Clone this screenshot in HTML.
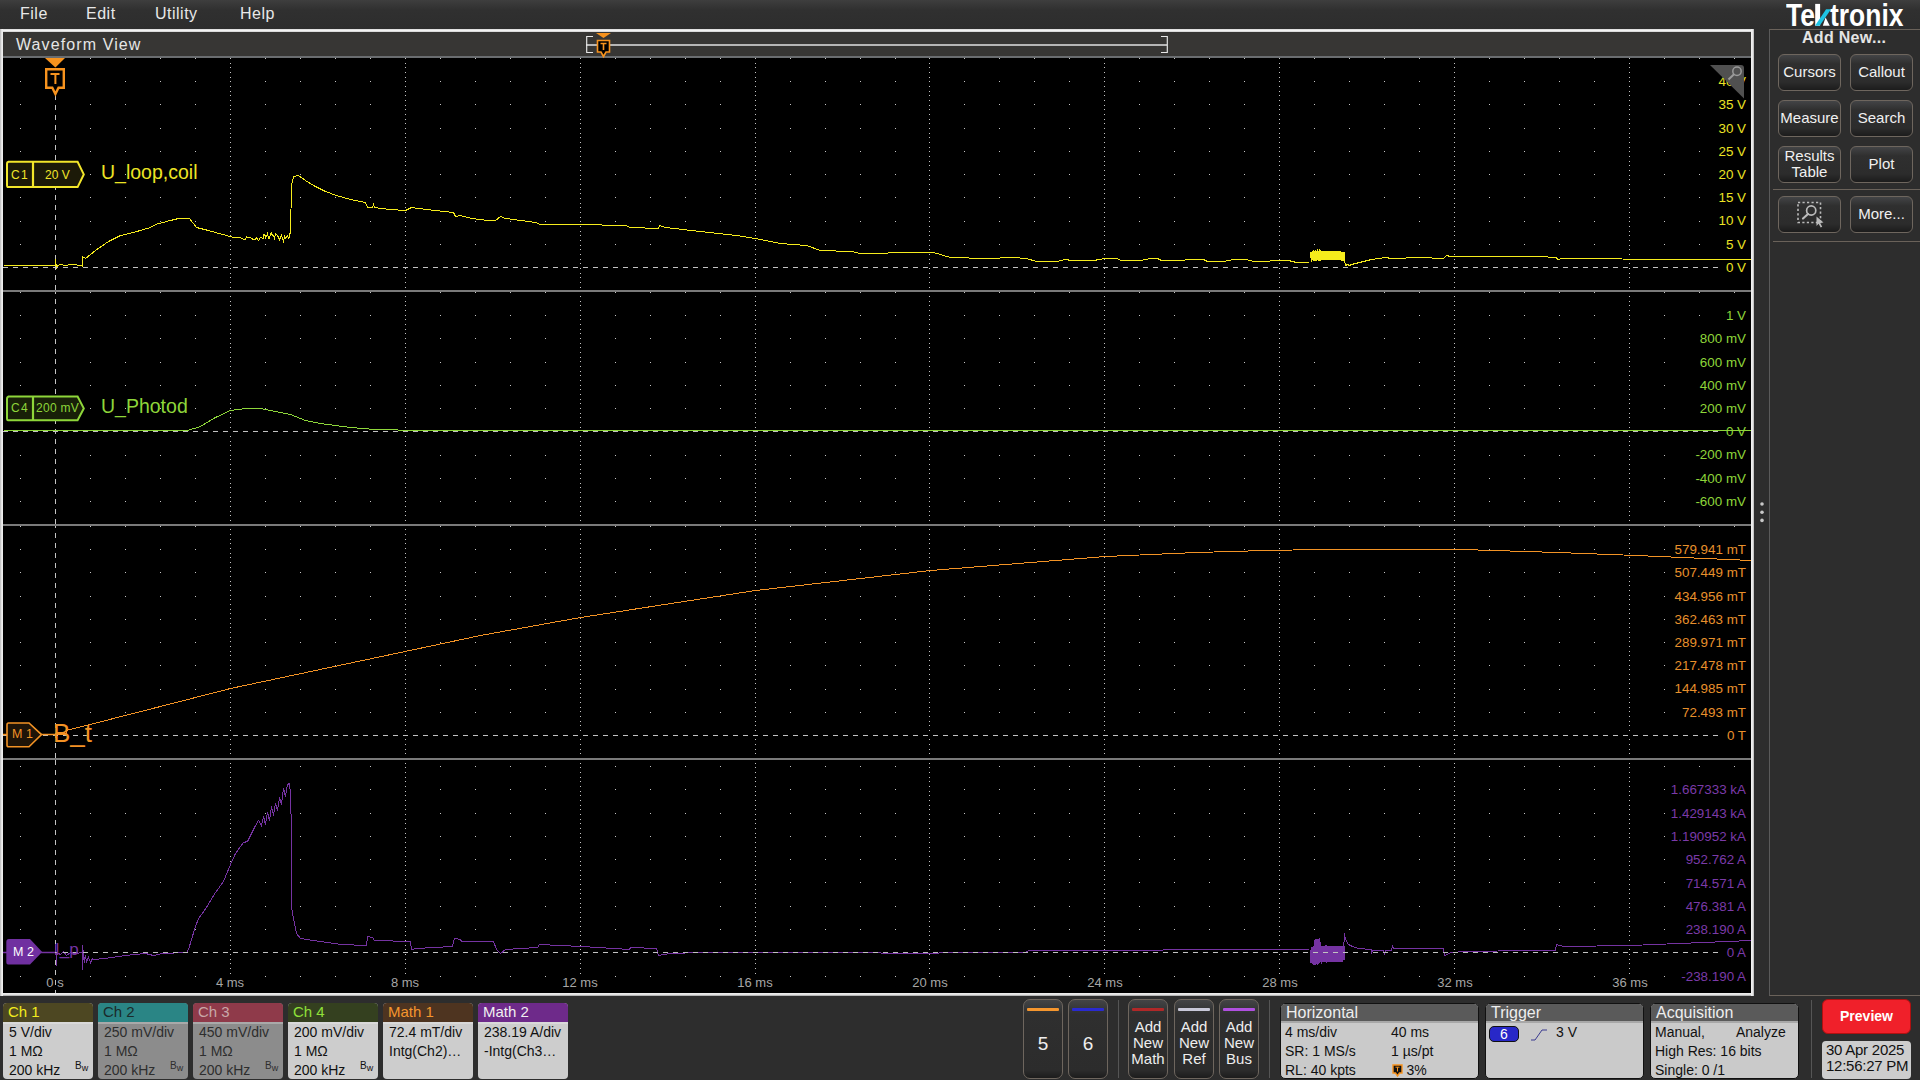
<!DOCTYPE html>
<html><head><meta charset="utf-8"><title>Waveform View</title>
<style>
*{margin:0;padding:0;box-sizing:border-box}
html,body{width:1920px;height:1080px;overflow:hidden;background:#2d2d2d;font-family:"Liberation Sans", sans-serif;}
.a{position:absolute;white-space:nowrap}
.menu{color:#e8e8e8;font-size:16px;top:5px;letter-spacing:0.5px}
.yl{position:absolute;right:169px;font-size:13.4px;line-height:14px;height:14px;text-align:right;background:#000;padding:0 5px 0 4px;white-space:nowrap}
.tl{position:absolute;top:975px;font-size:13px;line-height:16px;color:#a6a6a6;white-space:nowrap}
.btn{position:absolute;width:63px;height:37px;border:1px solid #6e665e;border-radius:6px;background:linear-gradient(#434446 0,#2f2f2f 9px,#2c2c2c 27px,#1c1c1c 100%);color:#f0f0f0;font-size:15px;text-align:center;line-height:33px}
.badge{position:absolute;top:1003px;width:90px;height:76px;border-radius:4px;overflow:hidden;background:#cdcdcd}
.badge .h{height:19px;font-size:15px;line-height:18px;padding-left:5px}
.badge .sep{position:absolute;top:19px;left:0;right:0;height:2px;background:rgba(255,255,255,0.25)}
.badge .b{position:absolute;top:20px;left:0;right:0;bottom:0;font-size:14px;color:#111;padding-left:6px;line-height:19px}
.bw{position:absolute;left:72px;top:57px;font-size:10px;line-height:11px;color:#111}
.sbtn{position:absolute;top:999px;width:40px;height:80px;border:1px solid #6e665e;border-radius:7px;background:linear-gradient(#434446 0,#2f2f2f 14px,#2c2c2c 70px,#1c1c1c 100%);color:#eee;text-align:center}
.box{position:absolute;top:1003px;height:76px;border-radius:5px;overflow:hidden;background:#cacaca;border:1px solid #111}
.box .h{height:19px;background:#5a5a5a;color:#eee;font-size:16px;line-height:17px;padding-left:5px;border-bottom:2px solid #a8a8a8}
.box .b{font-size:14px;color:#111;line-height:19px;padding-left:4px}
.cl{position:absolute;font-size:19.5px;line-height:22px;white-space:nowrap}
</style></head><body>

<div class="a" style="left:0;top:0;width:1920px;height:29px;background:linear-gradient(180deg,#3e3e3e 0,#303030 10px,#2d2d2d 29px)"></div>
<div class="a" style="left:0;top:29px;width:1754px;height:3px;background:linear-gradient(180deg,#d6d6d6,#f2f2f2 50%,#cfcfcf)"></div>
<div class="a" style="left:0;top:993px;width:1754px;height:3px;background:linear-gradient(180deg,#f0f0f0,#e2e2e2 50%,#a0a0a0)"></div>
<div class="a" style="left:0;top:29px;width:3px;height:967px;background:linear-gradient(90deg,#b8b8b8,#f4f4f4 70%,#e6e6e6)"></div>
<div class="a" style="left:1751px;top:29px;width:3px;height:967px;background:linear-gradient(90deg,#f4f4f4,#e8e8e8 50%,#b4b4b4)"></div>
<div class="a" style="left:3px;top:32px;width:1748px;height:24px;background:#373634"></div>
<div class="a" style="left:3px;top:56px;width:1748px;height:2px;background:#6a6d70"></div>
<div class="a" style="left:3px;top:58px;width:1748px;height:935px;background:#000"></div>
<div class="a" style="left:16px;top:36px;font-size:16px;line-height:18px;color:#e6e6e6;letter-spacing:1.1px">Waveform View</div>
<svg width="1920" height="1080" style="position:absolute;left:0;top:0"><line x1="586" y1="45" x2="1167" y2="45" stroke="#b6b6b6" stroke-width="2"/><path d="M593,36.5 H586.7 V52.5 H593" fill="none" stroke="#e8e8e8" stroke-width="1.15"/><path d="M1161,36.5 H1167.3 V52.5 H1161" fill="none" stroke="#e8e8e8" stroke-width="1.15"/><path d="M596,33 L611,33 L603.5,38 Z" fill="#f7931e"/><path d="M597.5,40.5 H609.5 V52 H606 L603.5,56.5 L601,52 H597.5 Z" fill="#000" stroke="#f7931e" stroke-width="1.6"/><path d="M600.5,43.5 H606.5 M603.5,43.5 V50" stroke="#f7931e" stroke-width="1.6"/></svg>
<div class="a menu" style="left:20px">File</div>
<div class="a menu" style="left:86px">Edit</div>
<div class="a menu" style="left:155px">Utility</div>
<div class="a menu" style="left:240px">Help</div>
<svg width="1920" height="1080" style="position:absolute;left:0;top:0">
<defs><g id="dr" fill="#c4c4c4"><rect x="20" y="0" width="1" height="1"/><rect x="90" y="0" width="1" height="1"/><rect x="125" y="0" width="1" height="1"/><rect x="160" y="0" width="1" height="1"/><rect x="195" y="0" width="1" height="1"/><rect x="265" y="0" width="1" height="1"/><rect x="300" y="0" width="1" height="1"/><rect x="335" y="0" width="1" height="1"/><rect x="370" y="0" width="1" height="1"/><rect x="440" y="0" width="1" height="1"/><rect x="475" y="0" width="1" height="1"/><rect x="510" y="0" width="1" height="1"/><rect x="545" y="0" width="1" height="1"/><rect x="615" y="0" width="1" height="1"/><rect x="650" y="0" width="1" height="1"/><rect x="685" y="0" width="1" height="1"/><rect x="720" y="0" width="1" height="1"/><rect x="790" y="0" width="1" height="1"/><rect x="825" y="0" width="1" height="1"/><rect x="860" y="0" width="1" height="1"/><rect x="895" y="0" width="1" height="1"/><rect x="964" y="0" width="1" height="1"/><rect x="999" y="0" width="1" height="1"/><rect x="1034" y="0" width="1" height="1"/><rect x="1069" y="0" width="1" height="1"/><rect x="1139" y="0" width="1" height="1"/><rect x="1174" y="0" width="1" height="1"/><rect x="1209" y="0" width="1" height="1"/><rect x="1244" y="0" width="1" height="1"/><rect x="1314" y="0" width="1" height="1"/><rect x="1349" y="0" width="1" height="1"/><rect x="1384" y="0" width="1" height="1"/><rect x="1419" y="0" width="1" height="1"/><rect x="1489" y="0" width="1" height="1"/><rect x="1524" y="0" width="1" height="1"/><rect x="1559" y="0" width="1" height="1"/><rect x="1594" y="0" width="1" height="1"/><rect x="1664" y="0" width="1" height="1"/><rect x="1699" y="0" width="1" height="1"/><rect x="1734" y="0" width="1" height="1"/></g><g id="vd" fill="#c4c4c4"><rect x="0" y="58" width="1" height="1"/><rect x="0" y="63" width="1" height="1"/><rect x="0" y="67" width="1" height="1"/><rect x="0" y="72" width="1" height="1"/><rect x="0" y="77" width="1" height="1"/><rect x="0" y="81" width="1" height="1"/><rect x="0" y="86" width="1" height="1"/><rect x="0" y="91" width="1" height="1"/><rect x="0" y="95" width="1" height="1"/><rect x="0" y="100" width="1" height="1"/><rect x="0" y="105" width="1" height="1"/><rect x="0" y="109" width="1" height="1"/><rect x="0" y="114" width="1" height="1"/><rect x="0" y="119" width="1" height="1"/><rect x="0" y="123" width="1" height="1"/><rect x="0" y="128" width="1" height="1"/><rect x="0" y="133" width="1" height="1"/><rect x="0" y="137" width="1" height="1"/><rect x="0" y="142" width="1" height="1"/><rect x="0" y="147" width="1" height="1"/><rect x="0" y="151" width="1" height="1"/><rect x="0" y="156" width="1" height="1"/><rect x="0" y="161" width="1" height="1"/><rect x="0" y="165" width="1" height="1"/><rect x="0" y="170" width="1" height="1"/><rect x="0" y="175" width="1" height="1"/><rect x="0" y="179" width="1" height="1"/><rect x="0" y="184" width="1" height="1"/><rect x="0" y="189" width="1" height="1"/><rect x="0" y="193" width="1" height="1"/><rect x="0" y="198" width="1" height="1"/><rect x="0" y="203" width="1" height="1"/><rect x="0" y="207" width="1" height="1"/><rect x="0" y="212" width="1" height="1"/><rect x="0" y="217" width="1" height="1"/><rect x="0" y="221" width="1" height="1"/><rect x="0" y="226" width="1" height="1"/><rect x="0" y="231" width="1" height="1"/><rect x="0" y="235" width="1" height="1"/><rect x="0" y="240" width="1" height="1"/><rect x="0" y="245" width="1" height="1"/><rect x="0" y="249" width="1" height="1"/><rect x="0" y="254" width="1" height="1"/><rect x="0" y="259" width="1" height="1"/><rect x="0" y="263" width="1" height="1"/><rect x="0" y="268" width="1" height="1"/><rect x="0" y="273" width="1" height="1"/><rect x="0" y="277" width="1" height="1"/><rect x="0" y="282" width="1" height="1"/><rect x="0" y="287" width="1" height="1"/><rect x="0" y="291" width="1" height="1"/><rect x="0" y="296" width="1" height="1"/><rect x="0" y="301" width="1" height="1"/><rect x="0" y="305" width="1" height="1"/><rect x="0" y="310" width="1" height="1"/><rect x="0" y="315" width="1" height="1"/><rect x="0" y="319" width="1" height="1"/><rect x="0" y="324" width="1" height="1"/><rect x="0" y="329" width="1" height="1"/><rect x="0" y="333" width="1" height="1"/><rect x="0" y="338" width="1" height="1"/><rect x="0" y="343" width="1" height="1"/><rect x="0" y="347" width="1" height="1"/><rect x="0" y="352" width="1" height="1"/><rect x="0" y="357" width="1" height="1"/><rect x="0" y="361" width="1" height="1"/><rect x="0" y="366" width="1" height="1"/><rect x="0" y="371" width="1" height="1"/><rect x="0" y="375" width="1" height="1"/><rect x="0" y="380" width="1" height="1"/><rect x="0" y="385" width="1" height="1"/><rect x="0" y="389" width="1" height="1"/><rect x="0" y="394" width="1" height="1"/><rect x="0" y="399" width="1" height="1"/><rect x="0" y="403" width="1" height="1"/><rect x="0" y="408" width="1" height="1"/><rect x="0" y="413" width="1" height="1"/><rect x="0" y="417" width="1" height="1"/><rect x="0" y="422" width="1" height="1"/><rect x="0" y="427" width="1" height="1"/><rect x="0" y="431" width="1" height="1"/><rect x="0" y="436" width="1" height="1"/><rect x="0" y="441" width="1" height="1"/><rect x="0" y="445" width="1" height="1"/><rect x="0" y="450" width="1" height="1"/><rect x="0" y="455" width="1" height="1"/><rect x="0" y="459" width="1" height="1"/><rect x="0" y="464" width="1" height="1"/><rect x="0" y="469" width="1" height="1"/><rect x="0" y="473" width="1" height="1"/><rect x="0" y="478" width="1" height="1"/><rect x="0" y="483" width="1" height="1"/><rect x="0" y="487" width="1" height="1"/><rect x="0" y="492" width="1" height="1"/><rect x="0" y="497" width="1" height="1"/><rect x="0" y="501" width="1" height="1"/><rect x="0" y="506" width="1" height="1"/><rect x="0" y="511" width="1" height="1"/><rect x="0" y="515" width="1" height="1"/><rect x="0" y="520" width="1" height="1"/><rect x="0" y="525" width="1" height="1"/><rect x="0" y="529" width="1" height="1"/><rect x="0" y="534" width="1" height="1"/><rect x="0" y="539" width="1" height="1"/><rect x="0" y="543" width="1" height="1"/><rect x="0" y="548" width="1" height="1"/><rect x="0" y="553" width="1" height="1"/><rect x="0" y="557" width="1" height="1"/><rect x="0" y="562" width="1" height="1"/><rect x="0" y="567" width="1" height="1"/><rect x="0" y="571" width="1" height="1"/><rect x="0" y="576" width="1" height="1"/><rect x="0" y="581" width="1" height="1"/><rect x="0" y="585" width="1" height="1"/><rect x="0" y="590" width="1" height="1"/><rect x="0" y="595" width="1" height="1"/><rect x="0" y="599" width="1" height="1"/><rect x="0" y="604" width="1" height="1"/><rect x="0" y="609" width="1" height="1"/><rect x="0" y="613" width="1" height="1"/><rect x="0" y="618" width="1" height="1"/><rect x="0" y="623" width="1" height="1"/><rect x="0" y="627" width="1" height="1"/><rect x="0" y="632" width="1" height="1"/><rect x="0" y="637" width="1" height="1"/><rect x="0" y="641" width="1" height="1"/><rect x="0" y="646" width="1" height="1"/><rect x="0" y="651" width="1" height="1"/><rect x="0" y="655" width="1" height="1"/><rect x="0" y="660" width="1" height="1"/><rect x="0" y="665" width="1" height="1"/><rect x="0" y="669" width="1" height="1"/><rect x="0" y="674" width="1" height="1"/><rect x="0" y="679" width="1" height="1"/><rect x="0" y="683" width="1" height="1"/><rect x="0" y="688" width="1" height="1"/><rect x="0" y="693" width="1" height="1"/><rect x="0" y="697" width="1" height="1"/><rect x="0" y="702" width="1" height="1"/><rect x="0" y="707" width="1" height="1"/><rect x="0" y="711" width="1" height="1"/><rect x="0" y="716" width="1" height="1"/><rect x="0" y="721" width="1" height="1"/><rect x="0" y="725" width="1" height="1"/><rect x="0" y="730" width="1" height="1"/><rect x="0" y="735" width="1" height="1"/><rect x="0" y="739" width="1" height="1"/><rect x="0" y="744" width="1" height="1"/><rect x="0" y="749" width="1" height="1"/><rect x="0" y="753" width="1" height="1"/><rect x="0" y="758" width="1" height="1"/><rect x="0" y="763" width="1" height="1"/><rect x="0" y="767" width="1" height="1"/><rect x="0" y="772" width="1" height="1"/><rect x="0" y="777" width="1" height="1"/><rect x="0" y="781" width="1" height="1"/><rect x="0" y="786" width="1" height="1"/><rect x="0" y="791" width="1" height="1"/><rect x="0" y="795" width="1" height="1"/><rect x="0" y="800" width="1" height="1"/><rect x="0" y="805" width="1" height="1"/><rect x="0" y="809" width="1" height="1"/><rect x="0" y="814" width="1" height="1"/><rect x="0" y="819" width="1" height="1"/><rect x="0" y="823" width="1" height="1"/><rect x="0" y="828" width="1" height="1"/><rect x="0" y="833" width="1" height="1"/><rect x="0" y="837" width="1" height="1"/><rect x="0" y="842" width="1" height="1"/><rect x="0" y="847" width="1" height="1"/><rect x="0" y="851" width="1" height="1"/><rect x="0" y="856" width="1" height="1"/><rect x="0" y="861" width="1" height="1"/><rect x="0" y="865" width="1" height="1"/><rect x="0" y="870" width="1" height="1"/><rect x="0" y="875" width="1" height="1"/><rect x="0" y="879" width="1" height="1"/><rect x="0" y="884" width="1" height="1"/><rect x="0" y="889" width="1" height="1"/><rect x="0" y="893" width="1" height="1"/><rect x="0" y="898" width="1" height="1"/><rect x="0" y="903" width="1" height="1"/><rect x="0" y="907" width="1" height="1"/><rect x="0" y="912" width="1" height="1"/><rect x="0" y="917" width="1" height="1"/><rect x="0" y="921" width="1" height="1"/><rect x="0" y="926" width="1" height="1"/><rect x="0" y="931" width="1" height="1"/><rect x="0" y="935" width="1" height="1"/><rect x="0" y="940" width="1" height="1"/><rect x="0" y="945" width="1" height="1"/><rect x="0" y="949" width="1" height="1"/><rect x="0" y="954" width="1" height="1"/><rect x="0" y="959" width="1" height="1"/><rect x="0" y="963" width="1" height="1"/><rect x="0" y="968" width="1" height="1"/><rect x="0" y="973" width="1" height="1"/></g><clipPath id="gc"><rect x="3" y="58" width="1748" height="935"/></clipPath></defs>
<use href="#dr" y="58"/>
<use href="#dr" y="81"/>
<use href="#dr" y="104"/>
<use href="#dr" y="128"/>
<use href="#dr" y="151"/>
<use href="#dr" y="174"/>
<use href="#dr" y="197"/>
<use href="#dr" y="221"/>
<use href="#dr" y="244"/>
<use href="#dr" y="267"/>
<use href="#dr" y="292"/>
<use href="#dr" y="315"/>
<use href="#dr" y="338"/>
<use href="#dr" y="362"/>
<use href="#dr" y="385"/>
<use href="#dr" y="408"/>
<use href="#dr" y="431"/>
<use href="#dr" y="455"/>
<use href="#dr" y="478"/>
<use href="#dr" y="501"/>
<use href="#dr" y="526"/>
<use href="#dr" y="549"/>
<use href="#dr" y="572"/>
<use href="#dr" y="596"/>
<use href="#dr" y="619"/>
<use href="#dr" y="642"/>
<use href="#dr" y="665"/>
<use href="#dr" y="689"/>
<use href="#dr" y="712"/>
<use href="#dr" y="735"/>
<use href="#dr" y="766"/>
<use href="#dr" y="789"/>
<use href="#dr" y="813"/>
<use href="#dr" y="836"/>
<use href="#dr" y="859"/>
<use href="#dr" y="882"/>
<use href="#dr" y="906"/>
<use href="#dr" y="929"/>
<use href="#dr" y="952"/>
<use href="#dr" y="976"/>
<use href="#vd" x="230"/>
<use href="#vd" x="405"/>
<use href="#vd" x="580"/>
<use href="#vd" x="755"/>
<use href="#vd" x="929"/>
<use href="#vd" x="1104"/>
<use href="#vd" x="1279"/>
<use href="#vd" x="1454"/>
<use href="#vd" x="1629"/>
<g fill="#c4c4c4"><rect x="55" y="95" width="1" height="5"/><rect x="55" y="105" width="1" height="5"/><rect x="55" y="115" width="1" height="5"/><rect x="55" y="125" width="1" height="5"/><rect x="55" y="135" width="1" height="5"/><rect x="55" y="145" width="1" height="5"/><rect x="55" y="155" width="1" height="5"/><rect x="55" y="165" width="1" height="5"/><rect x="55" y="175" width="1" height="5"/><rect x="55" y="185" width="1" height="5"/><rect x="55" y="195" width="1" height="5"/><rect x="55" y="205" width="1" height="5"/><rect x="55" y="215" width="1" height="5"/><rect x="55" y="225" width="1" height="5"/><rect x="55" y="235" width="1" height="5"/><rect x="55" y="245" width="1" height="5"/><rect x="55" y="255" width="1" height="5"/><rect x="55" y="265" width="1" height="5"/><rect x="55" y="275" width="1" height="5"/><rect x="55" y="285" width="1" height="5"/><rect x="55" y="290" width="1" height="4"/><rect x="55" y="299" width="1" height="5"/><rect x="55" y="309" width="1" height="5"/><rect x="55" y="319" width="1" height="5"/><rect x="55" y="329" width="1" height="5"/><rect x="55" y="339" width="1" height="5"/><rect x="55" y="349" width="1" height="5"/><rect x="55" y="359" width="1" height="5"/><rect x="55" y="369" width="1" height="5"/><rect x="55" y="379" width="1" height="5"/><rect x="55" y="389" width="1" height="5"/><rect x="55" y="399" width="1" height="5"/><rect x="55" y="409" width="1" height="5"/><rect x="55" y="419" width="1" height="5"/><rect x="55" y="429" width="1" height="5"/><rect x="55" y="439" width="1" height="5"/><rect x="55" y="449" width="1" height="5"/><rect x="55" y="459" width="1" height="5"/><rect x="55" y="469" width="1" height="5"/><rect x="55" y="479" width="1" height="5"/><rect x="55" y="489" width="1" height="5"/><rect x="55" y="499" width="1" height="5"/><rect x="55" y="509" width="1" height="5"/><rect x="55" y="519" width="1" height="5"/><rect x="55" y="524" width="1" height="4"/><rect x="55" y="533" width="1" height="5"/><rect x="55" y="543" width="1" height="5"/><rect x="55" y="553" width="1" height="5"/><rect x="55" y="563" width="1" height="5"/><rect x="55" y="573" width="1" height="5"/><rect x="55" y="583" width="1" height="5"/><rect x="55" y="593" width="1" height="5"/><rect x="55" y="603" width="1" height="5"/><rect x="55" y="613" width="1" height="5"/><rect x="55" y="623" width="1" height="5"/><rect x="55" y="633" width="1" height="5"/><rect x="55" y="643" width="1" height="5"/><rect x="55" y="653" width="1" height="5"/><rect x="55" y="663" width="1" height="5"/><rect x="55" y="673" width="1" height="5"/><rect x="55" y="683" width="1" height="5"/><rect x="55" y="693" width="1" height="5"/><rect x="55" y="703" width="1" height="5"/><rect x="55" y="713" width="1" height="5"/><rect x="55" y="723" width="1" height="5"/><rect x="55" y="733" width="1" height="5"/><rect x="55" y="743" width="1" height="5"/><rect x="55" y="753" width="1" height="5"/><rect x="55" y="760" width="1" height="5"/><rect x="55" y="770" width="1" height="5"/><rect x="55" y="780" width="1" height="5"/><rect x="55" y="790" width="1" height="5"/><rect x="55" y="800" width="1" height="5"/><rect x="55" y="810" width="1" height="5"/><rect x="55" y="820" width="1" height="5"/><rect x="55" y="830" width="1" height="5"/><rect x="55" y="840" width="1" height="5"/><rect x="55" y="850" width="1" height="5"/><rect x="55" y="860" width="1" height="5"/><rect x="55" y="870" width="1" height="5"/><rect x="55" y="880" width="1" height="5"/><rect x="55" y="890" width="1" height="5"/><rect x="55" y="900" width="1" height="5"/><rect x="55" y="910" width="1" height="5"/><rect x="55" y="920" width="1" height="5"/><rect x="55" y="930" width="1" height="5"/><rect x="55" y="940" width="1" height="5"/><rect x="55" y="950" width="1" height="5"/><rect x="55" y="960" width="1" height="5"/><rect x="55" y="970" width="1" height="5"/><rect x="55" y="980" width="1" height="5"/><rect x="55" y="990" width="1" height="3"/></g>
<rect x="3" y="290" width="1748" height="2" fill="#7a7a7a"/>
<rect x="3" y="524" width="1748" height="2" fill="#7a7a7a"/>
<rect x="3" y="758" width="1748" height="2" fill="#7a7a7a"/>
<rect x="3" y="267" width="1748" height="1" fill="#000"/>
<rect x="3" y="431" width="1748" height="1" fill="#000"/>
<rect x="3" y="735" width="1748" height="1" fill="#000"/>
<rect x="3" y="952" width="1748" height="1" fill="#000"/>
</svg>
<div class="yl" style="top:75px;color:#ece424">40 V</div>
<div class="yl" style="top:98px;color:#ece424">35 V</div>
<div class="yl" style="top:122px;color:#ece424">30 V</div>
<div class="yl" style="top:145px;color:#ece424">25 V</div>
<div class="yl" style="top:168px;color:#ece424">20 V</div>
<div class="yl" style="top:191px;color:#ece424">15 V</div>
<div class="yl" style="top:214px;color:#ece424">10 V</div>
<div class="yl" style="top:238px;color:#ece424">5 V</div>
<div class="yl" style="top:261px;color:#ece424">0 V</div>
<div class="yl" style="top:309px;color:#8ed63a">1 V</div>
<div class="yl" style="top:332px;color:#8ed63a">800 mV</div>
<div class="yl" style="top:356px;color:#8ed63a">600 mV</div>
<div class="yl" style="top:379px;color:#8ed63a">400 mV</div>
<div class="yl" style="top:402px;color:#8ed63a">200 mV</div>
<div class="yl" style="top:425px;color:#8ed63a">0 V</div>
<div class="yl" style="top:448px;color:#8ed63a">-200 mV</div>
<div class="yl" style="top:472px;color:#8ed63a">-400 mV</div>
<div class="yl" style="top:495px;color:#8ed63a">-600 mV</div>
<div class="yl" style="top:543px;color:#e8902c">579.941 mT</div>
<div class="yl" style="top:566px;color:#e8902c">507.449 mT</div>
<div class="yl" style="top:590px;color:#e8902c">434.956 mT</div>
<div class="yl" style="top:613px;color:#e8902c">362.463 mT</div>
<div class="yl" style="top:636px;color:#e8902c">289.971 mT</div>
<div class="yl" style="top:659px;color:#e8902c">217.478 mT</div>
<div class="yl" style="top:682px;color:#e8902c">144.985 mT</div>
<div class="yl" style="top:706px;color:#e8902c">72.493 mT</div>
<div class="yl" style="top:729px;color:#e8902c">0 T</div>
<div class="yl" style="top:783px;color:#7b3aa8">1.667333 kA</div>
<div class="yl" style="top:807px;color:#7b3aa8">1.429143 kA</div>
<div class="yl" style="top:830px;color:#7b3aa8">1.190952 kA</div>
<div class="yl" style="top:853px;color:#7b3aa8">952.762 A</div>
<div class="yl" style="top:877px;color:#7b3aa8">714.571 A</div>
<div class="yl" style="top:900px;color:#7b3aa8">476.381 A</div>
<div class="yl" style="top:923px;color:#7b3aa8">238.190 A</div>
<div class="yl" style="top:946px;color:#7b3aa8">0 A</div>
<div class="yl" style="top:970px;color:#7b3aa8">-238.190 A</div>
<svg width="1920" height="1080" style="position:absolute;left:0;top:0"><path d="M1710,65 L1741,65 Q1744,65 1744,68 L1744,98.5 Z" fill="#505050"/><circle cx="1737" cy="71.2" r="4.2" fill="none" stroke="#9a9a9a" stroke-width="1.5"/><line x1="1734" y1="74.2" x2="1728.5" y2="79.5" stroke="#9a9a9a" stroke-width="2"/></svg>
<svg width="1920" height="1080" style="position:absolute;left:0;top:0">
<defs><clipPath id="gc2"><rect x="3" y="58" width="1748" height="935"/></clipPath></defs>
<g clip-path="url(#gc2)" fill="none" stroke-linejoin="miter" shape-rendering="crispEdges">
<polyline points="3.5,265.5 55.5,265.5 55.5,259.5 56.5,268.5 57.5,265.5 60.5,264.5 65.5,265.5 70.5,264.5 82.5,265.5 82.5,266.5 82.5,256.5 85.5,258.5 95.5,250.5 108.5,241.5 120.5,235.5 133.5,232.5 150.5,227.5 155.5,224.5 166.5,221.5 178.5,218.5 189.5,218.5 196.5,227.5 208.5,230.5 233.5,237.5 240.5,237.5 243.5,239.5 245.5,239.5 246.5,236.5 247.5,237.5 250.5,237.5 251.5,238.5 253.5,239.5 255.5,239.5 256.5,237.5 258.5,240.5 260.5,237.5 263.5,238.5 263.5,234.5 265.5,235.5 265.5,238.5 267.5,233.5 268.5,238.5 269.5,238.5 270.5,234.5 271.5,232.5 271.5,234.5 273.5,235.5 274.5,238.5 275.5,233.5 277.5,235.5 279.5,239.5 281.5,235.5 282.5,238.5 283.5,241.5 284.5,236.5 285.5,238.5 287.5,235.5 288.5,238.5 289.5,237.5 289.5,233.5 290.5,233.5 291.5,185.5 293.5,176.5 298.5,175.5 305.5,180.5 313.5,185.5 325.5,191.5 336.5,195.5 350.5,199.5 365.5,202.5 367.5,207.5 372.5,207.5 373.5,204.5 374.5,207.5 380.5,208.5 403.5,210.5 405.5,210.5 411.5,207.5 426.5,209.5 453.5,212.5 455.5,216.5 460.5,215.5 471.5,218.5 488.5,220.5 495.5,220.5 500.5,216.5 505.5,218.5 513.5,219.5 535.5,222.5 540.5,224.5 600.5,224.5 603.5,225.5 625.5,225.5 630.5,227.5 658.5,228.5 659.5,225.5 665.5,227.5 700.5,231.5 736.5,235.5 755.5,238.5 780.5,243.5 806.5,245.5 820.5,250.5 851.5,251.5 860.5,253.5 880.5,253.5 896.5,252.5 933.5,252.5 950.5,257.5 986.5,258.5 1013.5,257.5 1026.5,258.5 1036.5,261.5 1056.5,261.5 1065.5,259.5 1071.5,260.5 1093.5,260.5 1105.5,258.5 1116.5,258.5 1121.5,260.5 1140.5,260.5 1150.5,258.5 1157.5,258.5 1161.5,260.5 1180.5,260.5 1190.5,259.5 1203.5,259.5 1207.5,261.5 1225.5,261.5 1226.5,260.5 1236.5,259.5 1246.5,259.5 1253.5,261.5 1266.5,261.5 1273.5,260.5 1288.5,260.5 1296.5,262.5 1308.5,262.5" stroke="#f6ec1c" stroke-width="1"/>
<polyline points="1344.5,260.5 1345.5,265.5 1347.5,264.5 1349.5,265.5 1351.5,264.5 1371.5,259.5 1385.5,257.5 1391.5,258.5 1420.5,257.5 1443.5,258.5 1446.5,255.5 1450.5,256.5 1538.5,256.5 1556.5,257.5 1557.5,259.5 1562.5,258.5 1680.5,259.5 1751.5,259.5" stroke="#f6ec1c" stroke-width="1"/>
<polygon points="1309.5,253.5 1310.5,251.5 1311.5,251.5 1312.5,250.5 1313.5,249.5 1314.5,251.5 1315.5,249.5 1316.5,251.5 1317.5,248.5 1318.5,251.5 1319.5,248.5 1320.5,250.5 1321.5,250.5 1326.5,250.5 1327.5,250.5 1328.5,250.5 1340.5,251.5 1344.5,251.5 1344.5,260.5 1340.5,260.5 1340.5,259.5 1321.5,259.5 1320.5,261.5 1319.5,260.5 1318.5,261.5 1317.5,259.5 1316.5,261.5 1314.5,260.5 1313.5,261.5 1312.5,259.5 1311.5,261.5 1310.5,258.5 1309.5,256.5" fill="#f6ec1c" stroke="none"/>
<polyline points="3.5,430.5 187.5,430.5 200.5,426.5 215.5,417.5 230.5,410.5 245.5,408.5 260.5,408.5 275.5,411.5 290.5,414.5 305.5,420.5 320.5,423.5 350.5,427.5 375.5,429.5 420.5,430.5 1751.5,430.5" stroke="#8ed63a" stroke-width="1"/>
<polyline points="3.5,734.5 66.5,734.5 66.5,730.5 160.5,706.5 230.5,688.5 480.5,635.5 580.5,617.5 755.5,590.5 930.5,570.5 1105.5,556.5 1196.5,552.5 1265.5,550.5 1320.5,549.5 1461.5,549.5 1557.5,552.5 1636.5,555.5 1751.5,560.5" stroke="#f39325" stroke-width="1"/>
<polyline points="3.5,952.5 55.5,952.5 55.5,944.5 56.5,965.5 56.5,952.5 60.5,954.5 63.5,951.5 66.5,955.5 70.5,952.5 75.5,953.5 82.5,952.5 82.5,944.5 82.5,969.5 83.5,950.5 84.5,962.5 85.5,955.5 86.5,961.5 88.5,957.5 90.5,962.5 92.5,958.5 93.5,959.5 104.5,958.5 125.5,955.5 145.5,953.5 153.5,955.5 162.5,953.5 186.5,952.5 188.5,949.5 194.5,929.5 198.5,918.5 204.5,910.5 215.5,892.5 223.5,881.5 230.5,864.5 235.5,853.5 243.5,842.5 247.5,841.5 254.5,827.5 258.5,820.5 261.5,825.5 263.5,816.5 265.5,824.5 267.5,812.5 269.5,820.5 271.5,806.5 273.5,815.5 275.5,803.5 277.5,810.5 279.5,797.5 281.5,804.5 283.5,788.5 285.5,796.5 287.5,784.5 289.5,783.5 290.5,794.5 291.5,833.5 291.5,907.5 293.5,918.5 296.5,933.5 300.5,938.5 306.5,939.5 320.5,941.5 341.5,944.5 366.5,945.5 367.5,936.5 372.5,937.5 374.5,940.5 410.5,941.5 411.5,949.5 416.5,948.5 452.5,946.5 454.5,938.5 460.5,939.5 461.5,941.5 493.5,941.5 496.5,949.5 500.5,953.5 505.5,949.5 537.5,947.5 539.5,944.5 581.5,946.5 629.5,949.5 630.5,947.5 656.5,948.5 658.5,955.5 670.5,953.5 700.5,952.5 880.5,952.5 881.5,953.5 937.5,953.5 940.5,952.5 1025.5,952.5 1028.5,950.5 1300.5,949.5 1308.5,949.5" stroke="#7533a2" stroke-width="1"/>
<polyline points="1343.5,950.5 1344.5,933.5 1345.5,939.5 1348.5,944.5 1352.5,946.5 1358.5,948.5 1371.5,949.5 1371.5,953.5 1372.5,950.5 1383.5,950.5 1384.5,953.5 1385.5,950.5 1391.5,950.5 1392.5,946.5 1393.5,948.5 1443.5,948.5 1444.5,955.5 1451.5,952.5 1465.5,951.5 1530.5,950.5 1555.5,950.5 1556.5,944.5 1563.5,946.5 1630.5,945.5 1751.5,940.5" stroke="#7533a2" stroke-width="1"/>
<polygon points="1309.5,949.5 1310.5,949.5 1310.5,946.5 1313.5,946.5 1314.5,939.5 1316.5,938.5 1318.5,938.5 1318.5,937.5 1319.5,938.5 1320.5,942.5 1320.5,945.5 1324.5,945.5 1324.5,944.5 1326.5,945.5 1344.5,945.5 1344.5,959.5 1342.5,959.5 1342.5,961.5 1327.5,961.5 1326.5,963.5 1324.5,961.5 1322.5,961.5 1321.5,964.5 1320.5,961.5 1318.5,964.5 1316.5,964.5 1315.5,960.5 1315.5,964.5 1312.5,964.5 1311.5,963.5 1310.5,962.5 1309.5,962.5" fill="#7533a2" stroke="none"/>
</g>
<defs><g id="zl" fill="#c2c2c2"><rect x="3" y="0" width="5" height="1"/><rect x="13" y="0" width="5" height="1"/><rect x="23" y="0" width="5" height="1"/><rect x="33" y="0" width="5" height="1"/><rect x="43" y="0" width="5" height="1"/><rect x="53" y="0" width="5" height="1"/><rect x="63" y="0" width="5" height="1"/><rect x="73" y="0" width="5" height="1"/><rect x="83" y="0" width="5" height="1"/><rect x="93" y="0" width="5" height="1"/><rect x="103" y="0" width="5" height="1"/><rect x="113" y="0" width="5" height="1"/><rect x="123" y="0" width="5" height="1"/><rect x="133" y="0" width="5" height="1"/><rect x="143" y="0" width="5" height="1"/><rect x="153" y="0" width="5" height="1"/><rect x="163" y="0" width="5" height="1"/><rect x="173" y="0" width="5" height="1"/><rect x="183" y="0" width="5" height="1"/><rect x="193" y="0" width="5" height="1"/><rect x="203" y="0" width="5" height="1"/><rect x="213" y="0" width="5" height="1"/><rect x="223" y="0" width="5" height="1"/><rect x="233" y="0" width="5" height="1"/><rect x="243" y="0" width="5" height="1"/><rect x="253" y="0" width="5" height="1"/><rect x="263" y="0" width="5" height="1"/><rect x="273" y="0" width="5" height="1"/><rect x="283" y="0" width="5" height="1"/><rect x="293" y="0" width="5" height="1"/><rect x="303" y="0" width="5" height="1"/><rect x="313" y="0" width="5" height="1"/><rect x="323" y="0" width="5" height="1"/><rect x="333" y="0" width="5" height="1"/><rect x="343" y="0" width="5" height="1"/><rect x="353" y="0" width="5" height="1"/><rect x="363" y="0" width="5" height="1"/><rect x="373" y="0" width="5" height="1"/><rect x="383" y="0" width="5" height="1"/><rect x="393" y="0" width="5" height="1"/><rect x="403" y="0" width="5" height="1"/><rect x="413" y="0" width="5" height="1"/><rect x="423" y="0" width="5" height="1"/><rect x="433" y="0" width="5" height="1"/><rect x="443" y="0" width="5" height="1"/><rect x="453" y="0" width="5" height="1"/><rect x="463" y="0" width="5" height="1"/><rect x="473" y="0" width="5" height="1"/><rect x="483" y="0" width="5" height="1"/><rect x="493" y="0" width="5" height="1"/><rect x="503" y="0" width="5" height="1"/><rect x="513" y="0" width="5" height="1"/><rect x="523" y="0" width="5" height="1"/><rect x="533" y="0" width="5" height="1"/><rect x="543" y="0" width="5" height="1"/><rect x="553" y="0" width="5" height="1"/><rect x="563" y="0" width="5" height="1"/><rect x="573" y="0" width="5" height="1"/><rect x="583" y="0" width="5" height="1"/><rect x="593" y="0" width="5" height="1"/><rect x="603" y="0" width="5" height="1"/><rect x="613" y="0" width="5" height="1"/><rect x="623" y="0" width="5" height="1"/><rect x="633" y="0" width="5" height="1"/><rect x="643" y="0" width="5" height="1"/><rect x="653" y="0" width="5" height="1"/><rect x="663" y="0" width="5" height="1"/><rect x="673" y="0" width="5" height="1"/><rect x="683" y="0" width="5" height="1"/><rect x="693" y="0" width="5" height="1"/><rect x="703" y="0" width="5" height="1"/><rect x="713" y="0" width="5" height="1"/><rect x="723" y="0" width="5" height="1"/><rect x="733" y="0" width="5" height="1"/><rect x="743" y="0" width="5" height="1"/><rect x="753" y="0" width="5" height="1"/><rect x="763" y="0" width="5" height="1"/><rect x="773" y="0" width="5" height="1"/><rect x="783" y="0" width="5" height="1"/><rect x="793" y="0" width="5" height="1"/><rect x="803" y="0" width="5" height="1"/><rect x="813" y="0" width="5" height="1"/><rect x="823" y="0" width="5" height="1"/><rect x="833" y="0" width="5" height="1"/><rect x="843" y="0" width="5" height="1"/><rect x="853" y="0" width="5" height="1"/><rect x="863" y="0" width="5" height="1"/><rect x="873" y="0" width="5" height="1"/><rect x="883" y="0" width="5" height="1"/><rect x="893" y="0" width="5" height="1"/><rect x="903" y="0" width="5" height="1"/><rect x="913" y="0" width="5" height="1"/><rect x="923" y="0" width="5" height="1"/><rect x="933" y="0" width="5" height="1"/><rect x="943" y="0" width="5" height="1"/><rect x="953" y="0" width="5" height="1"/><rect x="963" y="0" width="5" height="1"/><rect x="973" y="0" width="5" height="1"/><rect x="983" y="0" width="5" height="1"/><rect x="993" y="0" width="5" height="1"/><rect x="1003" y="0" width="5" height="1"/><rect x="1013" y="0" width="5" height="1"/><rect x="1023" y="0" width="5" height="1"/><rect x="1033" y="0" width="5" height="1"/><rect x="1043" y="0" width="5" height="1"/><rect x="1053" y="0" width="5" height="1"/><rect x="1063" y="0" width="5" height="1"/><rect x="1073" y="0" width="5" height="1"/><rect x="1083" y="0" width="5" height="1"/><rect x="1093" y="0" width="5" height="1"/><rect x="1103" y="0" width="5" height="1"/><rect x="1113" y="0" width="5" height="1"/><rect x="1123" y="0" width="5" height="1"/><rect x="1133" y="0" width="5" height="1"/><rect x="1143" y="0" width="5" height="1"/><rect x="1153" y="0" width="5" height="1"/><rect x="1163" y="0" width="5" height="1"/><rect x="1173" y="0" width="5" height="1"/><rect x="1183" y="0" width="5" height="1"/><rect x="1193" y="0" width="5" height="1"/><rect x="1203" y="0" width="5" height="1"/><rect x="1213" y="0" width="5" height="1"/><rect x="1223" y="0" width="5" height="1"/><rect x="1233" y="0" width="5" height="1"/><rect x="1243" y="0" width="5" height="1"/><rect x="1253" y="0" width="5" height="1"/><rect x="1263" y="0" width="5" height="1"/><rect x="1273" y="0" width="5" height="1"/><rect x="1283" y="0" width="5" height="1"/><rect x="1293" y="0" width="5" height="1"/><rect x="1303" y="0" width="5" height="1"/><rect x="1313" y="0" width="5" height="1"/><rect x="1323" y="0" width="5" height="1"/><rect x="1333" y="0" width="5" height="1"/><rect x="1343" y="0" width="5" height="1"/><rect x="1353" y="0" width="5" height="1"/><rect x="1363" y="0" width="5" height="1"/><rect x="1373" y="0" width="5" height="1"/><rect x="1383" y="0" width="5" height="1"/><rect x="1393" y="0" width="5" height="1"/><rect x="1403" y="0" width="5" height="1"/><rect x="1413" y="0" width="5" height="1"/><rect x="1423" y="0" width="5" height="1"/><rect x="1433" y="0" width="5" height="1"/><rect x="1443" y="0" width="5" height="1"/><rect x="1453" y="0" width="5" height="1"/><rect x="1463" y="0" width="5" height="1"/><rect x="1473" y="0" width="5" height="1"/><rect x="1483" y="0" width="5" height="1"/><rect x="1493" y="0" width="5" height="1"/><rect x="1503" y="0" width="5" height="1"/><rect x="1513" y="0" width="5" height="1"/><rect x="1523" y="0" width="5" height="1"/><rect x="1533" y="0" width="5" height="1"/><rect x="1543" y="0" width="5" height="1"/><rect x="1553" y="0" width="5" height="1"/><rect x="1563" y="0" width="5" height="1"/><rect x="1573" y="0" width="5" height="1"/><rect x="1583" y="0" width="5" height="1"/><rect x="1593" y="0" width="5" height="1"/><rect x="1603" y="0" width="5" height="1"/><rect x="1613" y="0" width="5" height="1"/><rect x="1623" y="0" width="5" height="1"/><rect x="1633" y="0" width="5" height="1"/><rect x="1643" y="0" width="5" height="1"/><rect x="1653" y="0" width="5" height="1"/><rect x="1663" y="0" width="5" height="1"/><rect x="1673" y="0" width="5" height="1"/><rect x="1683" y="0" width="5" height="1"/><rect x="1693" y="0" width="5" height="1"/><rect x="1703" y="0" width="5" height="1"/><rect x="1713" y="0" width="5" height="1"/></g></defs>
<use href="#zl" y="267"/>
<use href="#zl" y="431"/>
<use href="#zl" y="735"/>
<use href="#zl" y="952"/>
</svg>
<svg width="1920" height="1080" style="position:absolute;left:0;top:0"><path d="M45,58 L65,58 L55.4,67.5 Z" fill="#f7931e"/><path d="M46.2,69.2 H63.8 V87.8 H58.5 L55.4,94 L52.3,87.8 H46.2 Z" fill="#000" stroke="#f7931e" stroke-width="2.4"/><path d="M50.5,74 H59.5 M55.4,74 V84" stroke="#f7931e" stroke-width="2"/><path d="M8,161.7 H77.6 L83.8,174.4 L77.6,187.1 H8 Q7,187.1 7,185 V164 Q7,161.7 9,161.7 Z" fill="#1c1a08" stroke="#f2e62a" stroke-width="2"/><line x1="33" y1="162" x2="33" y2="187" stroke="#f2e62a" stroke-width="2.2"/><path d="M8,396.5 H77.6 L83.8,408.4 L77.6,420.3 H8 Q7,420.3 7,418 V399 Q7,396.5 9,396.5 Z" fill="#182008" stroke="#8ed63a" stroke-width="2"/><line x1="33" y1="397" x2="33" y2="420" stroke="#8ed63a" stroke-width="2.2"/><line x1="3" y1="734.5" x2="7" y2="734.5" stroke="#f39325" stroke-width="1.5"/><line x1="41" y1="734.5" x2="55" y2="734.5" stroke="#f39325" stroke-width="1.5"/><path d="M8.5,723 H29 L41.5,734.6 L29,746.8 H8.5 Q7,746.8 7,745 V725 Q7,723 8.5,723 Z" fill="#1e1408" stroke="#f39325" stroke-width="1.6"/><line x1="3" y1="952.5" x2="7" y2="952.5" stroke="#7533a2" stroke-width="1.5"/><line x1="41" y1="952.5" x2="55" y2="952.5" stroke="#7533a2" stroke-width="1.5"/><path d="M9,939 H30 L42.2,952 L30,964.6 H9 Q6.3,964.6 6.3,962 V942 Q6.3,939 9,939 Z" fill="#7030a0"/><circle cx="1762" cy="504" r="1.8" fill="#c8c8c8"/><circle cx="1762" cy="512.2" r="1.8" fill="#c8c8c8"/><circle cx="1762" cy="520.4" r="1.8" fill="#c8c8c8"/></svg>
<div class="a" style="left:11px;top:168px;font-size:12px;line-height:14px;color:#f2e62a;letter-spacing:-0.5px">C&thinsp;1</div>
<div class="a" style="left:45px;top:168px;font-size:12px;line-height:14px;color:#f2e62a">20 V</div>
<div class="cl" style="left:101px;top:161px;color:#ece424">U_loop,coil</div>
<div class="a" style="left:11px;top:401px;font-size:12px;line-height:14px;color:#8ed63a;letter-spacing:-0.5px">C&thinsp;4</div>
<div class="a" style="left:36px;top:401px;font-size:12px;line-height:14px;color:#8ed63a;letter-spacing:0.3px">200 mV</div>
<div class="cl" style="left:101px;top:395px;color:#8ed63a">U_Photod</div>
<div class="a" style="left:12px;top:727px;font-size:12.5px;color:#f39325">M 1</div>
<div class="a" style="left:53px;top:718px;font-size:26px;line-height:30px;color:#f39325">B_t</div>
<div class="a" style="left:13px;top:945px;font-size:12.5px;color:#fff">M 2</div>
<div class="a" style="left:55px;top:940px;font-size:17px;line-height:20px;color:#7533a2">I_p</div>
<div class="tl" style="left:15px;width:80px;text-align:center">0 s</div>
<div class="tl" style="left:190px;width:80px;text-align:center">4 ms</div>
<div class="tl" style="left:365px;width:80px;text-align:center">8 ms</div>
<div class="tl" style="left:540px;width:80px;text-align:center">12 ms</div>
<div class="tl" style="left:715px;width:80px;text-align:center">16 ms</div>
<div class="tl" style="left:890px;width:80px;text-align:center">20 ms</div>
<div class="tl" style="left:1065px;width:80px;text-align:center">24 ms</div>
<div class="tl" style="left:1240px;width:80px;text-align:center">28 ms</div>
<div class="tl" style="left:1415px;width:80px;text-align:center">32 ms</div>
<div class="tl" style="left:1590px;width:80px;text-align:center">36 ms</div>
<div class="a" style="left:1769px;top:29px;width:151px;height:967px;border-left:1px solid #5a5a5a;border-top:1px solid #6a625a;border-bottom:1px solid #6a625a"></div>
<div class="a" style="left:1786px;top:-2px;font-size:31px;line-height:36px;font-weight:bold;color:#fff;transform:scaleX(0.853);transform-origin:0 0">Te</div>
<div class="a" style="left:1830px;top:-2px;font-size:31px;line-height:36px;font-weight:bold;color:#fff;transform:scaleX(0.853);transform-origin:0 0">tronix</div>
<svg width="60" height="30" style="position:absolute;left:1800px;top:0"><rect x="15.2" y="3.9" width="4.9" height="21.9" fill="#fff"/><path d="M22.8,25.8 H29.8 L25.6,17.4 Z" fill="#fff"/><path d="M15,25.8 H19.7 L31,9.2 H26.1 Z" fill="#1ec4e4"/></svg>
<div class="a" style="left:1802px;top:29px;font-size:16px;line-height:18px;font-weight:bold;color:#e4e4e4;letter-spacing:0.3px">Add New...</div>
<div class="btn" style="left:1778px;top:54px">Cursors</div>
<div class="btn" style="left:1850px;top:54px">Callout</div>
<div class="btn" style="left:1778px;top:100px">Measure</div>
<div class="btn" style="left:1850px;top:100px">Search</div>
<div class="btn" style="left:1850px;top:146px">Plot</div>
<div class="btn" style="left:1850px;top:196px">More...</div>
<div class="btn" style="left:1778px;top:146px;line-height:16px;padding-top:1px">Results<br>Table</div>
<div class="btn" style="left:1778px;top:196px"><svg width="61" height="35" style="position:absolute;left:0;top:0"><rect x="19" y="5.5" width="22.5" height="20" fill="none" stroke="#bbb" stroke-width="1.6" stroke-dasharray="2.2 2.3"/><circle cx="32.2" cy="13.5" r="4.6" fill="none" stroke="#bbb" stroke-width="1.7"/><line x1="29" y1="17" x2="24" y2="21.5" stroke="#bbb" stroke-width="2.2" stroke-linecap="round"/><path d="M37.5,19.5 L44.5,25.5 L41.2,26 L43.2,29.8 L41.7,30.6 L39.6,26.8 L37.5,29 Z" fill="#bbb"/></svg></div>
<div class="a" style="left:1773px;top:189px;width:147px;height:1px;background:#6a625a"></div>
<div class="a" style="left:1773px;top:241px;width:147px;height:1px;background:#6a625a"></div>
<div class="badge" style="left:3px;background:#cdcdcd"><div class="h" style="background:#4d4722;color:#f2ec1e">Ch 1</div><div class="sep"></div><div class="b" style="color:#111">5 V/div<br>1 M&Omega;<br>200 kHz</div><div class="bw" style="color:#111">B<sub style="font-size:9px;vertical-align:-2px">w</sub></div></div>
<div class="badge" style="left:98px;background:#8c8c8c"><div class="h" style="background:#2a8585;color:#1a2a2a">Ch 2</div><div class="sep"></div><div class="b" style="color:#2e2e2e">250 mV/div<br>1 M&Omega;<br>200 kHz</div><div class="bw" style="color:#2e2e2e">B<sub style="font-size:9px;vertical-align:-2px">w</sub></div></div>
<div class="badge" style="left:193px;background:#8c8c8c"><div class="h" style="background:#8f3a4a;color:#c8a8a8">Ch 3</div><div class="sep"></div><div class="b" style="color:#2e2e2e">450 mV/div<br>1 M&Omega;<br>200 kHz</div><div class="bw" style="color:#2e2e2e">B<sub style="font-size:9px;vertical-align:-2px">w</sub></div></div>
<div class="badge" style="left:288px;background:#cdcdcd"><div class="h" style="background:#34401f;color:#90e03a">Ch 4</div><div class="sep"></div><div class="b" style="color:#111">200 mV/div<br>1 M&Omega;<br>200 kHz</div><div class="bw" style="color:#111">B<sub style="font-size:9px;vertical-align:-2px">w</sub></div></div>
<div class="badge" style="left:383px;background:#cdcdcd"><div class="h" style="background:#4e3420;color:#f5962e">Math 1</div><div class="sep"></div><div class="b" style="color:#111">72.4 mT/div<br>Intg(Ch2)&hellip;</div></div>
<div class="badge" style="left:478px;background:#cdcdcd"><div class="h" style="background:#6e2a8a;color:#f0f0f0">Math 2</div><div class="sep"></div><div class="b" style="color:#111">238.19 A/div<br>-Intg(Ch3&hellip;</div></div>
<div class="sbtn" style="left:1023px"><div style="margin:8px auto 0;width:32px;height:2.5px;border-radius:1px;background:#f5962e"></div><div style="font-size:19px;margin-top:22px">5</div></div>
<div class="sbtn" style="left:1068px"><div style="margin:8px auto 0;width:32px;height:2.5px;border-radius:1px;background:#2a2ad0"></div><div style="font-size:19px;margin-top:22px">6</div></div>
<div class="a" style="left:1118px;top:1000px;width:1px;height:78px;background:#555"></div>
<div class="sbtn" style="left:1128px"><div style="margin:8px auto 0;width:32px;height:2.5px;border-radius:1px;background:#b02828"></div><div style="font-size:15px;line-height:16px;margin-top:8px">Add<br>New<br>Math</div></div>
<div class="sbtn" style="left:1174px"><div style="margin:8px auto 0;width:32px;height:2.5px;border-radius:1px;background:#c8c8d8"></div><div style="font-size:15px;line-height:16px;margin-top:8px">Add<br>New<br>Ref</div></div>
<div class="sbtn" style="left:1219px"><div style="margin:8px auto 0;width:32px;height:2.5px;border-radius:1px;background:#b050e0"></div><div style="font-size:15px;line-height:16px;margin-top:8px">Add<br>New<br>Bus</div></div>
<div class="a" style="left:1269px;top:1000px;width:1px;height:78px;background:#555"></div>
<div class="box" style="left:1280px;width:199px"><div class="h">Horizontal</div><div class="b">4 ms/div<br>SR: 1 MS/s<br>RL: 40 kpts</div><div class="a" style="left:110px;top:19px;font-size:14px;line-height:19px;color:#111">40 ms<br>1 &micro;s/pt<br>&nbsp;&nbsp;&nbsp;&nbsp;3%</div><svg width="12" height="14" style="position:absolute;left:111px;top:60px"><path d="M1,1 H10 V9 H7.5 L5.5,12 L3.5,9 H1 Z" fill="#111" stroke="#f7931e" stroke-width="1.4"/><path d="M3.5,3.2 H7.5 M5.5,3.2 V7.5" stroke="#f7931e" stroke-width="1"/></svg></div>
<div class="box" style="left:1485px;width:159px"><div class="h">Trigger</div><div class="a" style="left:3px;top:22px;width:30px;height:16px;border-radius:5px;background:#2828c8;border:1px solid #111;color:#fff;font-size:14px;line-height:14px;text-align:center">6</div><svg width="20" height="16" style="position:absolute;left:44px;top:22px"><path d="M1,14 H5 L12,4 H17" fill="none" stroke="#3a3a90" stroke-width="1"/></svg><div class="a" style="left:70px;top:20px;font-size:14px;color:#111">3 V</div></div>
<div class="box" style="left:1650px;width:149px"><div class="h">Acquisition</div><div class="b">Manual,&nbsp;&nbsp;&nbsp;&nbsp;&nbsp;&nbsp;&nbsp;&nbsp;Analyze<br>High Res: 16 bits<br>Single: 0 /1</div></div>
<div class="a" style="left:1811px;top:1000px;width:1px;height:78px;background:#555"></div>
<div class="a" style="left:1822px;top:999px;width:89px;height:35px;border-radius:6px;background:#f0202a;border:1px solid #b01010;color:#fff;font-weight:bold;font-size:14px;text-align:center;line-height:33px">Preview</div>
<div class="a" style="left:1822px;top:1041px;width:89px;height:38px;border-radius:4px;background:#cdcdcd;color:#111;font-size:15px;line-height:16px;letter-spacing:-0.25px;padding:1px 0 0 4px">30 Apr 2025<br>12:56:27 PM</div>
</body></html>
